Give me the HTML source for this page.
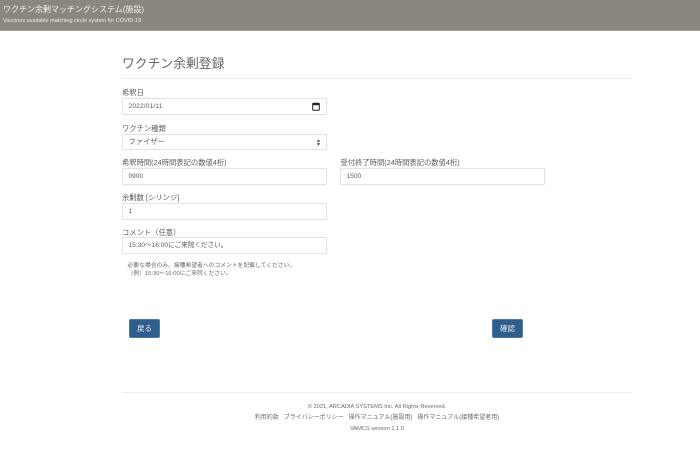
<!DOCTYPE html>
<html lang="ja"><head><meta charset="utf-8"><style>
html,body{margin:0;padding:0;width:700px;height:454px;overflow:hidden;background:#fff}
body{position:relative;font-family:"Liberation Sans","Noto Sans CJK JP",sans-serif;color:#5a5a5a;filter:blur(.3px)}
div{position:absolute;white-space:nowrap;box-sizing:border-box}
.h{height:31px;left:0;top:0;width:700px;background:#8b877f;border-bottom:1px solid #a09c95}
.lb{font-size:7.3px;line-height:10px;left:122px;color:#5c5c5c}
.in{left:122px;width:205px;height:17px;border:1px solid #dfe3ea;border-radius:2px;font-size:6.6px;line-height:15px;padding-left:5.5px;color:#5c5c5c;background:#fff;box-shadow:0 0 1px #e8ebf0}
.btn{width:31px;height:19px;background:#2f5d8c;border:1px solid #4d7aa6;border-radius:2px;color:#e8eef5;font-size:7.5px;line-height:17px;text-align:center;top:319px}
.f{left:122px;width:510px;text-align:center;color:#6a6a6a;font-size:5.7px;line-height:8px}
</style></head><body>
<div class="h"></div>
<div style="left:3px;top:4px;font-size:8px;line-height:11px;color:#f4f3f0">ワクチン余剰マッチングシステム(施設)</div>
<div style="left:3px;top:16px;font-size:5.55px;line-height:7px;color:#f2f0ea;margin-top:2px">Vaccines available matching circle system for COVID-19</div>
<div style="left:122px;top:55px;font-size:12.8px;line-height:17px;color:#666">ワクチン余剰登録</div>
<div style="left:122px;top:78px;width:510px;height:1px;background:#ececec"></div>
<div class="lb" style="top:88px">希釈日</div>
<div class="in" style="top:98px;height:17px;letter-spacing:.15px">2022/01/11</div>
<svg style="position:absolute;left:312px;top:102px" width="8" height="9" viewBox="0 0 8 9"><rect x=".7" y="1.2" width="6.6" height="7" rx=".8" fill="none" stroke="#222" stroke-width="1"/><rect x=".7" y="1.2" width="6.6" height="2" fill="#222"/></svg>
<div class="lb" style="top:124px">ワクチン種類</div>
<div class="in" style="top:134px;height:16px;font-size:7.3px;line-height:14px">ファイザー</div>
<svg style="position:absolute;left:316px;top:139px" width="5" height="7" viewBox="0 0 5 7"><path d="M2.5 .5 4.3 2.8H.7zM2.5 6.5 .7 4.2H4.3z" fill="#444"/></svg>
<div class="lb" style="top:158px">希釈時間(24時間表記の数値4桁)</div>
<div class="in" style="top:168px">0900</div>
<div class="lb" style="top:158px;left:340.5px">受付終了時間(24時間表記の数値4桁)</div>
<div class="in" style="top:168px;left:340px">1500</div>
<div class="lb" style="top:193px">余剰数 [シリンジ]</div>
<div class="in" style="top:203px">1</div>
<div class="lb" style="top:228px">コメント（任意）</div>
<div class="in" style="top:237px">15:30～16:00にご来院ください。</div>
<div style="left:127.5px;top:262px;font-size:5.8px;line-height:8px;color:#6a6a6a">必要な場合のみ、接種希望者へのコメントを記載してください。</div>
<div style="left:127.5px;top:270px;font-size:5.8px;line-height:8px;color:#6a6a6a">（例）15:30～16:00にご来院ください。</div>
<div class="btn" style="left:129px">戻る</div>
<div class="btn" style="left:492px">確認</div>
<div style="left:122px;top:392px;width:510px;height:1px;background:#ececec"></div>
<div class="f" style="top:403px">© 2021, ARCADIA SYSTEMS Inc. All Rights Reserved.</div>
<div class="f" style="top:414px;font-size:6px">利用約款 &nbsp; プライバシーポリシー &nbsp; 操作マニュアル(施設用) &nbsp; 操作マニュアル(接種希望者用)</div>
<div class="f" style="top:425px">VAMCS version 1.1.0</div>
</body></html>
